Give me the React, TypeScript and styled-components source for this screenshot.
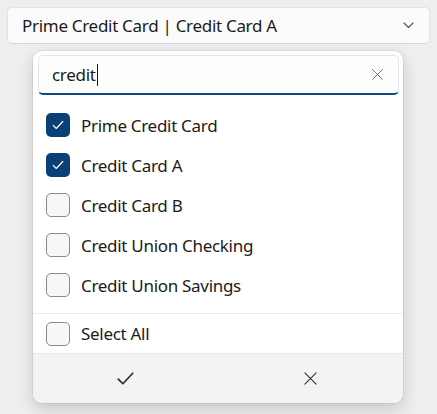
import React, { useState } from 'react';
import styled, { createGlobalStyle } from 'styled-components';

const GlobalStyle = createGlobalStyle`
  html, body {
    margin: 0;
    padding: 0;
    background: #eeeeee;
    font-family: "Noto Sans", "Open Sans", sans-serif;
    color: #1b1b1b;
  }
`;

const options = [
  { label: 'Prime Credit Card', checked: true },
  { label: 'Credit Card A', checked: true },
  { label: 'Credit Card B', checked: false },
  { label: 'Credit Union Checking', checked: false },
  { label: 'Credit Union Savings', checked: false },
];

const CheckMark = ({ size = 14, stroke = '#ffffff' }: { size?: number; stroke?: string }) => (
  <svg width={size} height={size} viewBox="0 0 16 16" fill="none">
    <path d="M2.5 8.5 L6 12 L13.5 4" stroke={stroke} strokeWidth="1.3" strokeLinecap="round" strokeLinejoin="round" />
  </svg>
);

const Cross = ({ size = 14, stroke = '#333' }: { size?: number; stroke?: string }) => (
  <svg width={size} height={size} viewBox="0 0 16 16" fill="none">
    <path d="M2 2 L14 14 M14 2 L2 14" stroke={stroke} strokeWidth="1.1" strokeLinecap="round" />
  </svg>
);

const App = () => {
  const [items, setItems] = useState(options);

  const toggle = (i: number) =>
    setItems(prev => prev.map((it, idx) => (idx === i ? { ...it, checked: !it.checked } : it)));

  return (
    <>
      <GlobalStyle />
      <Page>
        <ComboBox>
          <ComboText>Prime Credit Card | Credit Card A</ComboText>
          <svg width="11" height="7" viewBox="0 0 11 7" fill="none">
            <path d="M1 1 L5.5 5.5 L10 1" stroke="#555" strokeWidth="1.1" strokeLinecap="round" strokeLinejoin="round" />
          </svg>
        </ComboBox>

        <Popup>
          <SearchBox>
            <SearchText>
              credit<Caret />
            </SearchText>
            <ClearButton>
              <Cross size={13} stroke="#5c5c5c" />
            </ClearButton>
          </SearchBox>

          <List>
            {items.map((it, i) => (
              <Row key={it.label} onClick={() => toggle(i)}>
                <Box $checked={it.checked}>{it.checked && <CheckMark />}</Box>
                <Label>{it.label}</Label>
              </Row>
            ))}
          </List>

          <SelectAllRow>
            <Box $checked={false} />
            <Label>Select All</Label>
          </SelectAllRow>

          <Footer>
            <FooterButton>
              <CheckMark size={21} stroke="#2b2b2b" />
            </FooterButton>
            <FooterButton>
              <Cross size={15} stroke="#2b2b2b" />
            </FooterButton>
          </Footer>
        </Popup>
      </Page>
    </>
  );
};

const Page = styled.div`
  position: relative;
  width: 437px;
  height: 414px;
  padding: 7px;
  box-sizing: border-box;
  overflow: hidden;
`;

const ComboBox = styled.div`
  display: flex;
  align-items: center;
  justify-content: space-between;
  width: 423px;
  height: 37px;
  box-sizing: border-box;
  padding: 0 15px 0 14px;
  background: #fbfbfb;
  border: 1px solid #e2e2e2;
  border-bottom-color: #d4d4d4;
  border-radius: 5px;
`;

const ComboText = styled.span`
  font-size: 17px;
  letter-spacing: -0.3px;
  color: #1b1b1b;
`;

const Popup = styled.div`
  position: absolute;
  left: 33px;
  top: 51px;
  width: 370px;
  height: 352px;
  display: flex;
  flex-direction: column;
  background: #ffffff;
  border-radius: 9px;
  box-shadow: 0 6px 16px rgba(0, 0, 0, 0.16), 0 0 0 1px rgba(0, 0, 0, 0.06);
  overflow: hidden;
`;

const SearchBox = styled.div`
  display: flex;
  align-items: center;
  justify-content: space-between;
  margin: 4px 4px 0 5px;
  height: 40px;
  box-sizing: border-box;
  padding: 0 14px 0 13px;
  background: #fdfdfd;
  border: 1px solid #e6e6e6;
  border-bottom: 2px solid #0b4a86;
  border-radius: 5px;
`;

const SearchText = styled.span`
  display: flex;
  align-items: center;
  font-size: 17px;
  letter-spacing: -0.3px;
`;

const Caret = styled.span`
  display: inline-block;
  width: 1px;
  height: 22px;
  margin-left: 1px;
  background: #1b1b1b;
`;

const ClearButton = styled.span`
  display: flex;
  align-items: center;
`;

const List = styled.div`
  display: flex;
  flex-direction: column;
  padding-top: 10px;
  padding-bottom: 8px;
  border-bottom: 1px solid #ebebeb;
`;

const Row = styled.div`
  display: flex;
  align-items: center;
  gap: 11px;
  height: 40px;
  padding-left: 13px;
  cursor: pointer;
`;

const SelectAllRow = styled(Row)`
  height: 39px;
`;

const Box = styled.span<{ $checked: boolean }>`
  display: flex;
  align-items: center;
  justify-content: center;
  width: 24px;
  height: 24px;
  box-sizing: border-box;
  border-radius: 5px;
  background: ${p => (p.$checked ? '#0b4077' : '#f7f7f7')};
  border: ${p => (p.$checked ? 'none' : '1px solid #8a8a8a')};
`;

const Label = styled.span`
  font-size: 17px;
  letter-spacing: -0.3px;
  color: #1b1b1b;
`;

const Footer = styled.div`
  display: flex;
  flex: 1;
  background: #f3f3f3;
  border-top: 1px solid #e5e5e5;
`;

const FooterButton = styled.div`
  flex: 1;
  display: flex;
  align-items: center;
  justify-content: center;
`;

export default App;
